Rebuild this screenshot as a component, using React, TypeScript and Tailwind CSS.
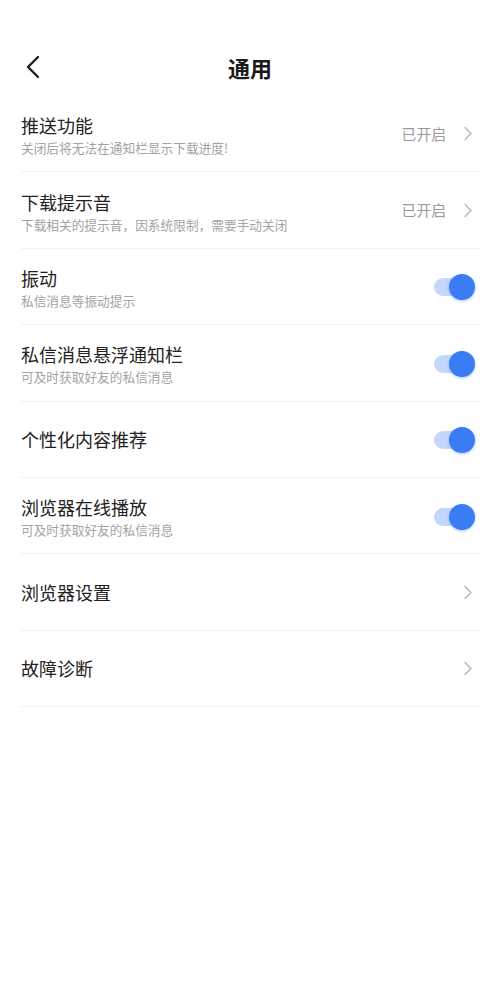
import type { ReactNode } from "react";

type Row = {
  title: string;
  desc?: string;
  right: "status" | "toggle" | "arrow";
};

const rows: Row[] = [
  { title: "推送功能", desc: "关闭后将无法在通知栏显示下载进度!", right: "status" },
  { title: "下载提示音", desc: "下载相关的提示音，因系统限制，需要手动关闭", right: "status" },
  { title: "振动", desc: "私信消息等振动提示", right: "toggle" },
  { title: "私信消息悬浮通知栏", desc: "可及时获取好友的私信消息", right: "toggle" },
  { title: "个性化内容推荐", right: "toggle" },
  { title: "浏览器在线播放", desc: "可及时获取好友的私信消息", right: "toggle" },
  { title: "浏览器设置", right: "arrow" },
  { title: "故障诊断", right: "arrow" },
];

function Chevron() {
  return (
    <svg width="10" height="15" viewBox="0 0 10 15" fill="none" className="shrink-0">
      <path d="M2 1.5 L8 7.5 L2 13.5" stroke="#b5b5b5" strokeWidth="1.4" strokeLinecap="round" strokeLinejoin="round" />
    </svg>
  );
}

function Toggle() {
  return (
    <div className="relative h-[26px] w-[41px]">
      <div className="absolute left-0 top-[4px] h-[18px] w-[34px] rounded-full bg-[#c4d7fa]" />
      <div className="absolute right-0 top-0 h-[26px] w-[26px] rounded-full bg-[#3a7cf3] shadow-[0_1px_3px_rgba(58,124,243,0.45)]" />
    </div>
  );
}

function SettingRow({ row }: { row: Row }) {
  let right: ReactNode = null;
  if (row.right === "status") {
    right = (
      <div className="flex items-center gap-[17px] pr-[7px]">
        <span className="text-[14.8px] text-[#9a9a9a]">已开启</span>
        <Chevron />
      </div>
    );
  } else if (row.right === "toggle") {
    right = (
      <div className="pr-[5px] pt-[2px]">
        <Toggle />
      </div>
    );
  } else {
    right = (
      <div className="pr-[7px]">
        <Chevron />
      </div>
    );
  }

  return (
    <div className="flex h-[76.4px] items-center justify-between border-b border-[#f1f1f1]">
      <div className={row.desc ? "flex flex-col pt-[3px]" : "flex flex-col"}>
        <span className="text-[18px] leading-[24px] text-[#222]">{row.title}</span>
        {row.desc && <span className="mt-[2px] text-[12.7px] leading-[18px] text-[#a3a3a3]">{row.desc}</span>}
      </div>
      {right}
    </div>
  );
}

export default function App() {
  return (
    <div
      className="min-h-[1000px] w-[500px] bg-white pt-[39px]"
      style={{ fontFamily: '"Noto Sans CJK SC", "Noto Sans", sans-serif' }}
    >
      <div className="relative flex h-[57px] items-center justify-center">
        <svg width="16" height="24" viewBox="0 0 16 24" fill="none" className="absolute left-[25px] top-[16px]">
          <path d="M13 2 L3 12 L13 22" stroke="#1e1e1e" strokeWidth="2.4" strokeLinecap="round" strokeLinejoin="round" />
        </svg>
        <span className="mt-[-1px] text-[22px] font-semibold text-[#1a1a1a]">通用</span>
      </div>
      <div className="mx-[21px] w-[459px]">
        {rows.map((r) => (
          <SettingRow key={r.title} row={r} />
        ))}
      </div>
    </div>
  );
}
